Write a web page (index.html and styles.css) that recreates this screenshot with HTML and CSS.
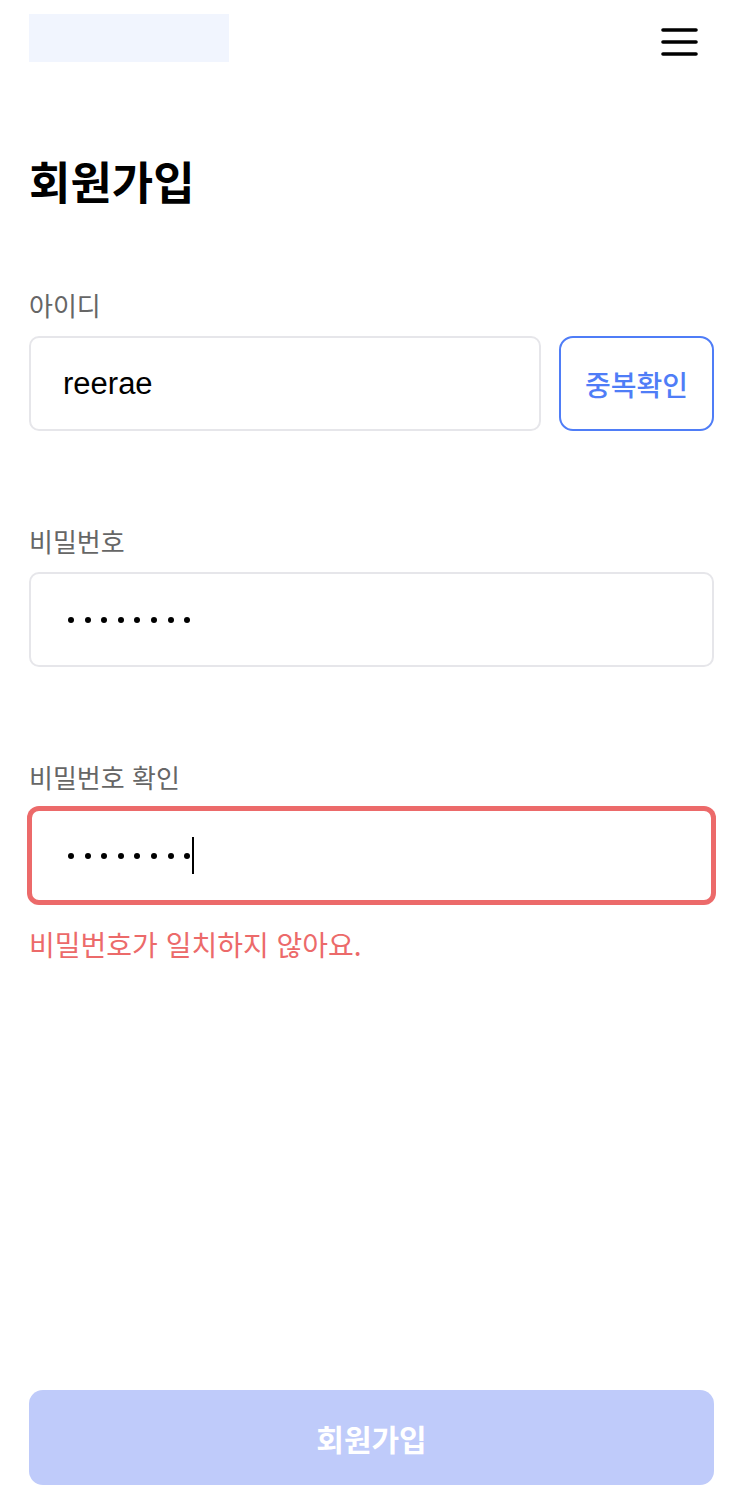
FILE: index.html
```html
<!DOCTYPE html>
<html lang="ko">
<head>
<meta charset="utf-8">
<title>회원가입</title>
<link rel="stylesheet" href="styles.css">
</head>
<body>
<div class="page">
  <header class="header">
    <div class="logo"></div>
    <button class="menu" aria-label="메뉴">
      <svg width="37" height="30" viewBox="0 0 37 30"><path d="M2 3h33M2 15h33M2 27h33" stroke="#000" stroke-width="3.6" stroke-linecap="round" fill="none"/></svg>
    </button>
  </header>

  <main class="content">
    <h1 class="title">회원가입</h1>

    <div class="field">
      <div class="label">아이디</div>
      <div class="row">
        <div class="input"><span class="value">reerae</span></div>
        <button class="check">중복확인</button>
      </div>
    </div>

    <div class="field">
      <div class="label">비밀번호</div>
      <div class="input">
        <span class="dots"><i></i><i></i><i></i><i></i><i></i><i></i><i></i><i></i></span>
      </div>
    </div>

    <div class="field">
      <div class="label">비밀번호 확인</div>
      <div class="input input-error">
        <span class="dots"><i></i><i></i><i></i><i></i><i></i><i></i><i></i><i></i></span><span class="caret"></span>
      </div>
      <p class="error">비밀번호가 일치하지 않아요.</p>
    </div>
  </main>

  <footer class="footer">
    <button class="submit">회원가입</button>
  </footer>
</div>
</body>
</html>
```

FILE: styles.css
```css
* { box-sizing: border-box; }

html, body {
  margin: 0;
  padding: 0;
  background: #fff;
}

body {
  font-family: "Liberation Sans", "Noto Sans CJK KR", sans-serif;
  color: #000;
}

.page {
  min-height: 100vh;
  display: flex;
  flex-direction: column;
  padding: 0 34px 21px 29px;
}

.header {
  display: flex;
  justify-content: space-between;
  align-items: flex-start;
  padding-top: 14px;
  height: 76px;
}

.logo {
  width: 200px;
  height: 48px;
  background: #f1f5fe;
}

.menu {
  margin: 13px 16px 0 0;
  padding: 0;
  border: 0;
  background: none;
  width: 37px;
  height: 30px;
  display: block;
}

.menu svg { display: block; }

.content {
  display: flex;
  flex-direction: column;
}

.title {
  margin: 78px 0 0;
  font-size: 45px;
  line-height: 54px;
  font-weight: 700;
  font-family: "Noto Sans CJK KR", sans-serif;
  letter-spacing: 0;
}

.field {
  display: flex;
  flex-direction: column;
  margin-top: 93px;
}

.field:first-of-type { margin-top: 80px; }

.label {
  font-family: "Noto Sans CJK KR", sans-serif;
  font-size: 26px;
  line-height: 34px;
  color: #666;
  margin-bottom: 14px;
}

.row {
  display: flex;
  gap: 18px;
}

.row .input { flex: 1; }

.input {
  height: 95px;
  border: 2px solid #e6e6ea;
  border-radius: 10px;
  padding-left: 32px;
  display: flex;
  align-items: center;
  background: #fff;
}

.value {
  font-size: 31px;
  color: #000;
}

.dots {
  display: flex;
  gap: 10.6px;
  margin-left: 5px;
}

.dots i {
  display: block;
  width: 6px;
  height: 6px;
  border-radius: 50%;
  background: #000;
}

.caret {
  display: block;
  width: 2px;
  height: 37px;
  background: #000;
  margin-left: 2px;
}

.input-error {
  border: 3px solid #ec6a6a;
  box-shadow: 0 0 0 2px #ec6a6a;
  padding-left: 31px;
}

.check {
  width: 155px;
  height: 95px;
  border: 2px solid #4f7df7;
  border-radius: 14px;
  background: #fff;
  color: #4f7df7;
  font-family: "Noto Sans CJK KR", sans-serif;
  font-size: 28px;
  font-weight: 500;
  padding: 0;
}

.error {
  margin: 24px 0 0;
  font-family: "Noto Sans CJK KR", sans-serif;
  font-size: 28px;
  line-height: 34px;
  color: #ec6a6a;
}

.footer {
  margin-top: auto;
}

.submit {
  display: block;
  width: 100%;
  height: 95px;
  border: 0;
  border-radius: 14px;
  background: #bfcbfa;
  color: #fff;
  font-family: "Noto Sans CJK KR", sans-serif;
  font-size: 30px;
  font-weight: 700;
}
```
